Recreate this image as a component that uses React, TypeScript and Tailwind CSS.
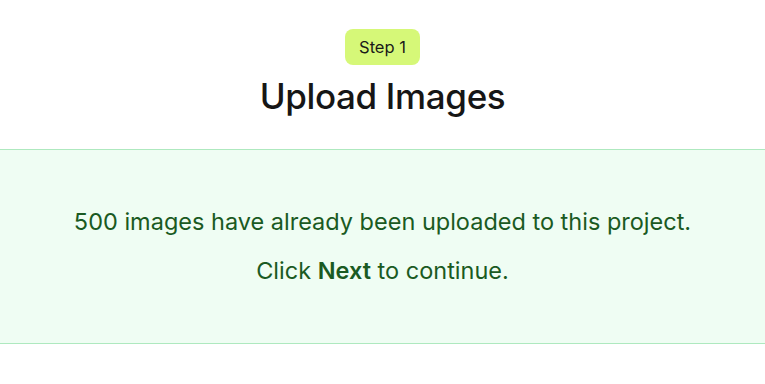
export default function App() {
  return (
    <div
      className="w-full min-h-screen bg-white flex flex-col"
      style={{ fontFamily: 'Inter, "Noto Sans", sans-serif' }}
    >
      <div className="flex flex-col items-center pt-[29px] pb-[31px]">
        <span className="rounded-lg bg-[#d6f878] px-[14px] h-9 flex items-center text-[16.5px] text-[#1a1a1a]">
          Step 1
        </span>
        <h1 className="mt-[9px] text-[35px] leading-[44px] font-medium tracking-[-0.01em] text-[#161616]">
          Upload Images
        </h1>
      </div>
      <div className="h-[195px] border-y border-[#aee9bf] bg-[#effdf3] flex flex-col items-center justify-center gap-[17px] text-[23.5px] leading-[32px] text-[#1a5a22]">
        <p>500 images have already been uploaded to this project.</p>
        <p>
          Click <span className="font-semibold">Next</span> to continue.
        </p>
      </div>
    </div>
  );
}
